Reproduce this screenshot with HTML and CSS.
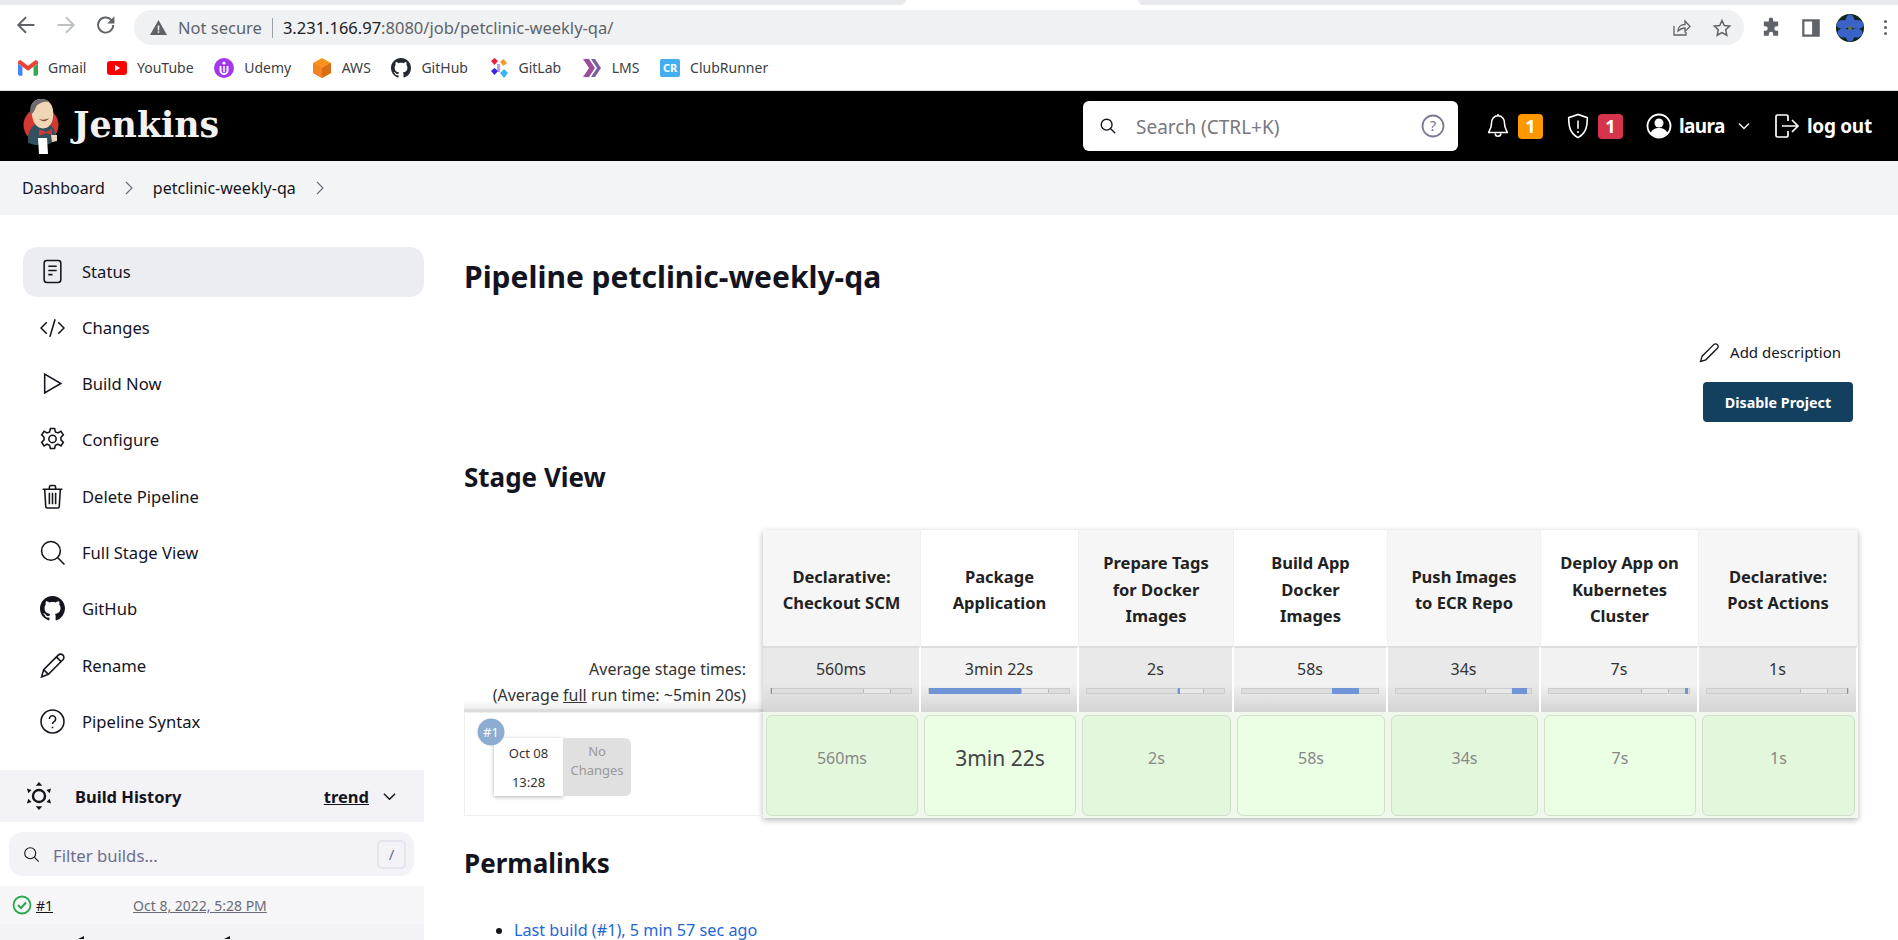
FILE: index.html
```html
<!DOCTYPE html>
<html lang="en">
<head>
    <meta charset="UTF-8">
    <title>petclinic-weekly-qa [Jenkins]</title>
    <link rel="stylesheet" href="styles.css">
</head>
<body>
    <!-- browser chrome -->
    <div class="tabstrip">
        <div class="tab-left"></div>
        <div class="tab-right"></div>
    </div>
    <div class="toolbar">
        <svg class="nav-icon" viewBox="0 0 20 20"><path d="M17 10H4M10 3.5 3.5 10l6.500 6.500" fill="none" stroke="#5f6368" stroke-width="1.6"/></svg>
        <svg class="nav-icon" viewBox="0 0 20 20"><path d="M3 10h13M10 3.5l6.500 6.500-6.500 6.500" fill="none" stroke="#bdc1c6" stroke-width="1.6"/></svg>
        <svg class="nav-icon" viewBox="0 0 20 20"><path d="M16 10a6.300 6.300 0 1 1-1.900-4.500L16.500 8" fill="none" stroke="#5f6368" stroke-width="1.6"/><path d="M17 2.800v6h-6z" fill="#5f6368"/></svg>
        <div class="omnibox">
            <svg class="warn" viewBox="0 0 16 14"><path d="M8 0 16 14H0z" fill="#5f6368"/><path d="M7.300 5h1.400v4.500H7.300zM7.300 10.500h1.400V12H7.300z" fill="#fff"/></svg>
            <span class="not-secure">Not secure</span>
            <span class="omni-sep"></span>
            <span class="url"><b>3.231.166.97</b>:8080/job/petclinic-weekly-qa/</span>
            <svg class="omni-share" viewBox="0 0 20 20"><path d="M3 8v9h12v-3M7 13c0-4 3-6.500 7-6.500V3l5 5.500-5 5V10c-3 0-5 1-7 3z" fill="none" stroke="#5f6368" stroke-width="1.3"/></svg>
            <svg class="omni-star" viewBox="0 0 20 20"><path d="m10 2.500 2.300 5 5.400.6-4 3.700 1.100 5.400-4.800-2.700-4.800 2.700 1.100-5.400-4-3.700 5.400-.6z" fill="none" stroke="#5f6368" stroke-width="1.5"/></svg>
        </div>
        <svg class="ext-icon" viewBox="0 0 20 20"><path d="M8 2.500a2 2 0 0 1 4 0V4h4.500v4.500H15a2 2 0 0 0 0 4h1.500V17H12v-1.500a2 2 0 0 0-4 0V17H3.500v-4.500H5a2 2 0 0 0 0-4H3.500V4H8z" fill="#5f6368"/></svg>
        <svg class="ext-icon" viewBox="0 0 20 20"><path d="M3 3h14v14H3z" fill="none" stroke="#5f6368" stroke-width="2"/><path d="M11 3h6v14h-6z" fill="#5f6368"/></svg>
        <svg class="avatar" viewBox="0 0 28 28">
            <circle cx="14" cy="14" r="14" fill="#12261d"/>
            <g fill="#3a62c8">
                <ellipse cx="14" cy="7" rx="4.500" ry="6.500"/>
                <ellipse cx="14" cy="21" rx="4.500" ry="6.500"/>
                <ellipse cx="7" cy="10.500" rx="6.500" ry="4.500"/>
                <ellipse cx="21" cy="10.500" rx="6.500" ry="4.500"/>
                <ellipse cx="7.500" cy="19" rx="6" ry="4.500"/>
                <ellipse cx="20.500" cy="19" rx="6" ry="4.500"/>
            </g>
            <circle cx="14" cy="14" r="2" fill="#5d7a2b"/>
        </svg>
        <span class="dots"><i></i><i></i><i></i></span>
    </div>
    <div class="bookmarks">
        <a class="bookmark">
            <svg viewBox="0 0 18 14"><path d="M0 3v9.500A1.500 1.500 0 0 0 1.500 14H4V6z" fill="#4285f4"/><path d="M14 6v8h2.500a1.500 1.500 0 0 0 1.500-1.500V3z" fill="#34a853"/><path d="M0 3 9 9.500 18 3V1.800C18 .3 16.200-.5 15 .5L9 5 3 .5C1.800-.5 0 .3 0 1.800z" fill="#ea4335"/></svg>
            Gmail
        </a>
        <a class="bookmark">
            <svg viewBox="0 0 20 14"><rect width="20" height="14" rx="3" fill="#f00"/><path d="m8 4 5 3-5 3z" fill="#fff"/></svg>
            YouTube
        </a>
        <a class="bookmark">
            <svg viewBox="0 0 20 20"><circle cx="10" cy="10" r="10" fill="#a435f0"/><path d="M6.500 8v4.500a3.500 3.500 0 0 0 7 0V8" fill="none" stroke="#fff" stroke-width="2"/><circle cx="10" cy="5" r="1.600" fill="#fff"/><path d="M10 8v6" stroke="#fff" stroke-width="1.5"/></svg>
            Udemy
        </a>
        <a class="bookmark">
            <svg viewBox="0 0 20 20"><path d="M10 0 19 5v10l-9 5-9-5V5z" fill="#f7931e"/><path d="M10 10v10l-9-5V5z" fill="#f58220"/><path d="M10 10 19 5v10l-9 5z" fill="#d96d14"/></svg>
            AWS
        </a>
        <a class="bookmark">
            <svg viewBox="0 0 16 16"><path fill="#24292f" d="M8 0C3.580 0 0 3.580 0 8c0 3.540 2.290 6.530 5.470 7.590.4.070.55-.17.55-.38 0-.19-.01-.82-.01-1.490-2.010.37-2.530-.49-2.690-.94-.09-.23-.48-.94-.82-1.130-.28-.15-.68-.52-.01-.53.63-.01 1.080.58 1.230.82.72 1.210 1.870.87 2.330.66.070-.52.28-.87.51-1.070-1.780-.2-3.640-.89-3.640-3.950 0-.87.31-1.590.82-2.150-.08-.2-.36-1.020.08-2.120 0 0 .67-.21 2.200.82.64-.18 1.320-.27 2-.27.68 0 1.360.09 2 .27 1.530-1.040 2.200-.82 2.200-.82.44 1.100.16 1.920.08 2.120.51.56.82 1.270.82 2.150 0 3.070-1.870 3.750-3.650 3.950.29.25.54.73.54 1.480 0 1.070-.01 1.930-.01 2.200 0 .21.15.46.55.38A8.013 8.013 0 0 0 16 8c0-4.420-3.580-8-8-8z"/></svg>
            GitHub
        </a>
        <a class="bookmark">
            <svg viewBox="0 0 20 20"><path d="M2 3 5.500 0 9 3 5.500 7z" fill="#e8203a"/><path d="M11 4 14.500 1 18 5l-3.500 3z" fill="#f59a23"/><path d="M2 13l3.500-3L9 13l-3.500 4z" fill="#3a22e0"/><path d="M11 15l4-4 4 4-4 5z" fill="#3ab5f5"/><path d="M8 6h3v8H8z" fill="#8d5bd0" opacity=".6"/></svg>
            GitLab
        </a>
        <a class="bookmark">
            <svg viewBox="0 0 20 20"><path d="M1 1h6l6 9-6 9H1l6-9z" fill="#9b4f96"/><path d="M9 1h4l6 9-6 9H9l6-9z" fill="#7b5aa6"/></svg>
            LMS
        </a>
        <a class="bookmark">
            <span class="cr-icon">CR</span>
            ClubRunner
        </a>
    </div>

    <!-- jenkins header -->
    <header class="page-header">
        <a class="logo">
            <svg class="logo-mark" viewBox="0 0 40 58">
                <circle cx="21" cy="28" r="17.5" fill="#d33833"/>
                <path d="M8 46c-1-8 2-16 8-19l14 1c5 3 6 10 5 16l-8 4-12 0z" fill="#335061"/>
                <path d="M11 14C10 6 15 2 21 2s11 4 12 11c1 8-1 14-5 17-5 3-10 1-13-3-2-3-3-8-4-13z" fill="#f0d6b7"/>
                <path d="M11 18C8 10 13 2 21 2c4 0 7 1 9 3-6-1-12 1-14 5-1 3-3 6-5 8z" fill="#6d6b6d"/>
                <path d="M19 22c3 1 7 1 10-1-2 4-7 4-10 1z" fill="#7b4a35"/>
                <path d="M19 32l7 3 6-3v6l-6-2-7 3z" fill="#d33833"/>
                <path d="M18 41h9l1 16H19z" fill="#fff"/>
                <path d="M31 38h6v6l-5 1z" fill="#f0d6b7"/>
            </svg>
            <span class="logo-text">Jenkins</span>
        </a>
        <div class="search-box">
            <svg class="search-icon" viewBox="0 0 20 20"><circle cx="8.5" cy="8.5" r="6" fill="none" stroke="#14141f" stroke-width="1.5"/><path d="m13 13 5 5" stroke="#14141f" stroke-width="1.5"/></svg>
            <span class="search-text">Search (CTRL+K)</span>
            <svg class="search-help" viewBox="0 0 24 24"><circle cx="12" cy="12" r="10.5" fill="none" stroke="#7b7b94" stroke-width="1.8"/><text x="12" y="17" text-anchor="middle" class="help-mark">?</text></svg>
        </div>
        <svg class="head-icon bell" viewBox="0 0 24 28"><path d="M12 3c-4.500 0-7 3.500-7 8 0 6-3 9-3 10h20c0-1-3-4-3-10 0-4.500-2.500-8-7-8zM9 22a3 3 0 0 0 6 0M12 1v2" fill="none" stroke="#fff" stroke-width="1.7"/></svg>
        <span class="count count-orange">1</span>
        <svg class="head-icon shield" viewBox="0 0 24 28"><path d="M12 1.500 2 5c0 11 2 17 10 21.500C20 22 22 16 22 5zM12 8v9M12 19.500v2" fill="none" stroke="#fff" stroke-width="1.7"/></svg>
        <span class="count count-red">1</span>
        <svg class="head-icon user" viewBox="0 0 26 26"><circle cx="13" cy="13" r="11.5" fill="none" stroke="#fff" stroke-width="1.8"/><circle cx="13" cy="10" r="4.5" fill="#fff"/><path d="M4.500 20c2-4 5-5 8.500-5s6.500 1 8.500 5c-2 2.500-5 4-8.500 4s-6.500-1.500-8.500-4z" fill="#fff"/></svg>
        <span class="head-link user-name">laura</span>
        <svg class="head-chevron" viewBox="0 0 12 8"><path d="m1 1.500 5 5 5-5" fill="none" stroke="#fff" stroke-width="1.3"/></svg>
        <svg class="head-icon logout" viewBox="0 0 26 26"><path d="M14 8V3.500A1.500 1.500 0 0 0 12.500 2h-9A1.500 1.500 0 0 0 2 3.500v19A1.500 1.500 0 0 0 3.500 24h9a1.500 1.500 0 0 0 1.500-1.500V18M8 13h16M18 7l6 6-6 6" fill="none" stroke="#fff" stroke-width="1.7"/></svg>
        <span class="head-link log-out">log out</span>
    </header>

    <nav class="breadcrumbs">
        <a>Dashboard</a>
        <svg viewBox="0 0 8 14"><path d="m1 1 6 6-6 6" fill="none" stroke="#6b6b78" stroke-width="1.1"/></svg>
        <a>petclinic-weekly-qa</a>
        <svg viewBox="0 0 8 14"><path d="m1 1 6 6-6 6" fill="none" stroke="#6b6b78" stroke-width="1.1"/></svg>
    </nav>

    <div class="page">
        <aside class="sidebar">
            <div class="tasks">
                <a class="task task-active">
                    <svg viewBox="0 0 24 24"><rect x="4" y="1.5" width="16" height="21" rx="2.5"/><path d="M8 7h8M8 11h8M8 15h4"/></svg>
                    Status
                </a>
                <a class="task">
                    <svg viewBox="0 0 24 24"><path d="M6.500 7 1 12.500 6.500 18M17.500 7l5.500 5.500L17.500 18M14.500 4l-5 17"/></svg>
                    Changes
                </a>
                <a class="task">
                    <svg viewBox="0 0 24 24"><path d="M4.500 3v18L20 12z"/></svg>
                    Build Now
                </a>
                <a class="task">
                    <svg viewBox="0 0 24 24"><path d="M10 1.500h4l.8 3.200 2.400 1 2.900-1.600 2.300 3.400-2.300 2.400v2.400l2.300 2.400-2.300 3.400-2.900-1.600-2.400 1-.8 3.200h-4l-.8-3.200-2.400-1-2.900 1.600-2.300-3.400 2.300-2.400V9.900L1.600 7.500l2.300-3.400 2.900 1.600 2.400-1z"/><circle cx="12" cy="11.5" r="3.5"/></svg>
                    Configure
                </a>
                <a class="task">
                    <svg viewBox="0 0 24 24"><path d="M2.500 5h19M9 5V3a1.500 1.500 0 0 1 1.500-1.500h3A1.500 1.500 0 0 1 15 3v2M4.500 5l1 16.500A1.500 1.500 0 0 0 7 23h10a1.500 1.500 0 0 0 1.500-1.500l1-16.500M9 8.500v11M12 8.500v11M15 8.500v11"/></svg>
                    Delete Pipeline
                </a>
                <a class="task">
                    <svg viewBox="0 0 24 24"><circle cx="10.5" cy="10.5" r="9"/><path d="m17 17 6.500 6.500"/></svg>
                    Full Stage View
                </a>
                <a class="task">
                    <svg class="solid" viewBox="0 0 16 16"><path d="M8 0C3.580 0 0 3.580 0 8c0 3.540 2.290 6.530 5.470 7.590.4.070.55-.17.55-.38 0-.19-.01-.82-.01-1.490-2.010.37-2.530-.49-2.690-.94-.09-.23-.48-.94-.82-1.130-.28-.15-.68-.52-.01-.53.63-.01 1.080.58 1.230.82.72 1.210 1.870.87 2.330.66.070-.52.28-.87.51-1.070-1.780-.2-3.640-.89-3.640-3.950 0-.87.31-1.590.82-2.150-.08-.2-.36-1.020.08-2.120 0 0 .67-.21 2.200.82.64-.18 1.320-.27 2-.27.68 0 1.360.09 2 .27 1.530-1.040 2.200-.82 2.200-.82.44 1.100.16 1.920.08 2.120.51.56.82 1.270.82 2.150 0 3.070-1.870 3.750-3.650 3.950.29.25.54.73.54 1.480 0 1.070-.01 1.930-.01 2.200 0 .21.15.46.55.38A8.013 8.013 0 0 0 16 8c0-4.420-3.580-8-8-8z"/></svg>
                    GitHub
                </a>
                <a class="task">
                    <svg viewBox="0 0 24 24"><path d="m1.500 23 2-7L17.500 2a3 3 0 0 1 4.500 4.500L8 20.500zM3.500 16l4.500 4.500M16 4l4 4"/></svg>
                    Rename
                </a>
                <a class="task">
                    <svg viewBox="0 0 24 24"><circle cx="12" cy="12" r="11"/><path d="M9 9.500a3 3 0 1 1 4.500 2.600c-1 .6-1.500 1.200-1.500 2.400M12 17v1.500"/></svg>
                    Pipeline Syntax
                </a>
            </div>

            <div class="history-head">
                <svg class="history-icon" viewBox="0 0 28 30"><circle cx="14" cy="15" r="6.5" fill="none" stroke="#14141f" stroke-width="2.6"/><path d="m14 0 3.500 4h-7zM14 30l-3.500-4h7zM1 7l5 1.500L2.500 12zM27 7l-5 1.500 3.500 3.500zM1 23l5-1.500L2.500 18zM27 23l-5-1.500 3.500-3.500z" fill="#14141f"/></svg>
                <span class="history-title">Build History</span>
                <a class="trend">trend</a>
                <svg class="trend-chevron" viewBox="0 0 14 9"><path d="m1 1.500 6 6 6-6" fill="none" stroke="#14141f" stroke-width="1.5"/></svg>
            </div>
            <div class="filter">
                <svg viewBox="0 0 20 20"><circle cx="8.5" cy="8.5" r="6.5" fill="none" stroke="#14141f" stroke-width="1.3"/><path d="m13.500 13.500 5 5" stroke="#14141f" stroke-width="1.3"/></svg>
                <span class="filter-text">Filter builds...</span>
                <span class="filter-key">/</span>
            </div>
            <div class="build-row">
                <svg viewBox="0 0 20 20"><circle cx="10" cy="10" r="8.5" fill="none" stroke="#2aa84f" stroke-width="1.8"/><path d="m6 10 3 3 5-5.500" fill="none" stroke="#2aa84f" stroke-width="2"/></svg>
                <a class="build-number">#1</a>
                <a class="build-date">Oct 8, 2022, 5:28 PM</a>
            </div>
            <div class="build-rest">
                <i class="tip"></i>
                <i class="tip"></i>
            </div>
        </aside>

        <main class="content">
            <h1>Pipeline petclinic-weekly-qa</h1>
            <div class="actions">
                <a class="add-desc">
                    <svg viewBox="0 0 20 20"><path d="m1.500 18.500 1.500-5L14 2.500a2.100 2.100 0 0 1 3.500 3.500L6.500 17z" fill="none" stroke="#14141f" stroke-width="1.3"/></svg>
                    Add description
                </a>
                <button class="disable-btn">Disable Project</button>
            </div>

            <h2 class="stage-title">Stage View</h2>
            <section class="stage-view">
                <div class="stage-labels">
                    <div class="labels-top"></div>
                    <div class="labels-avg">
                        <span>Average stage times:</span>
                        <span>(Average <u>full</u> run time: ~5min 20s)</span>
                    </div>
                    <div class="labels-run">
                        <span class="run-badge">#1</span>
                        <div class="run-date"><span>Oct 08</span><span>13:28</span></div>
                        <div class="run-changes">No<br>Changes</div>
                    </div>
                </div>
                <div class="stage-grid">
                    <div class="stage-head">Declarative:<br>Checkout SCM</div>
                    <div class="stage-head">Package<br>Application</div>
                    <div class="stage-head">Prepare Tags<br>for Docker<br>Images</div>
                    <div class="stage-head">Build App<br>Docker<br>Images</div>
                    <div class="stage-head">Push Images<br>to ECR Repo</div>
                    <div class="stage-head">Deploy App on<br>Kubernetes<br>Cluster</div>
                    <div class="stage-head">Declarative:<br>Post Actions</div>

                    <div class="stage-avg">560ms<div class="bar"><i style="left:0;width:0.7%"></i></div></div>
                    <div class="stage-avg">3min 22s<div class="bar"><i style="left:0;width:66%"></i></div></div>
                    <div class="stage-avg">2s<div class="bar"><i style="left:66.5%;width:1.5%"></i></div></div>
                    <div class="stage-avg">58s<div class="bar"><i style="left:66.5%;width:19.5%"></i></div></div>
                    <div class="stage-avg">34s<div class="bar"><i style="left:85.8%;width:11%"></i></div></div>
                    <div class="stage-avg">7s<div class="bar"><i style="left:97%;width:2.5%"></i></div></div>
                    <div class="stage-avg">1s<div class="bar"><i style="left:99.3%;width:0.7%"></i></div></div>

                    <div class="stage-cell"><div class="cell-box">560ms</div></div>
                    <div class="stage-cell"><div class="cell-box cell-long">3min 22s</div></div>
                    <div class="stage-cell"><div class="cell-box">2s</div></div>
                    <div class="stage-cell"><div class="cell-box">58s</div></div>
                    <div class="stage-cell"><div class="cell-box">34s</div></div>
                    <div class="stage-cell"><div class="cell-box">7s</div></div>
                    <div class="stage-cell"><div class="cell-box">1s</div></div>
                </div>
            </section>

            <h2 class="permalinks-title">Permalinks</h2>
            <ul class="permalinks">
                <li><a>Last build (#1), 5 min 57 sec ago</a></li>
            </ul>
        </main>
    </div>
</body>
</html>
```
FILE: styles.css
```css
html, body {
    margin: 0;
    padding: 0;
}

body {
    width: 1898px;
    height: 940px;
    overflow: hidden;
    background: #fff;
    color: #14141f;
    font-family: "Noto Sans", "Open Sans", sans-serif;
    font-size: 16px;
}

svg {
    display: block;
    flex: none;
}

/* browser chrome */
.tabstrip {
    display: flex;
    justify-content: space-between;
    height: 5px;
}

.tab-left {
    width: 906px;
    background: #e8eaed;
    border-radius: 0 0 8px 0;
}

.tab-right {
    width: 760px;
    background: #e8eaed;
    border-radius: 0 0 0 8px;
}

.toolbar {
    display: flex;
    align-items: center;
    height: 40px;
    padding: 0 0 0 14px;
}

.nav-icon {
    width: 24px;
    height: 24px;
    margin-right: 16px;
}

.omnibox {
    display: flex;
    align-items: center;
    width: 1610px;
    height: 35px;
    margin-top: 5px;
    padding: 0 11px 0 16px;
    box-sizing: border-box;
    background: #eff1f3;
    border-radius: 18px;
    font-size: 16.5px;
    color: #5f6368;
}

.warn {
    width: 17px;
    height: 15px;
    margin-right: 11px;
}

.omni-sep {
    width: 1px;
    height: 20px;
    margin: 0 10px;
    background: #9aa0a6;
}

.url b {
    font-weight: 400;
    color: #202124;
}

.omni-share {
    width: 20px;
    height: 20px;
    margin-left: auto;
}

.omni-star {
    width: 20px;
    height: 20px;
    margin-left: 21px;
    margin-right: 1px;
}

.ext-icon {
    width: 22px;
    height: 22px;
    margin-top: 5px;
    margin-left: 16px;
}

.ext-icon + .ext-icon {
    margin-left: 18px;
}

.avatar {
    width: 28px;
    height: 28px;
    margin-top: 5px;
    margin-left: 14px;
}

.dots {
    display: flex;
    flex-direction: column;
    gap: 3px;
    margin-top: 5px;
    margin-left: 20px;
}

.dots i {
    width: 3px;
    height: 3px;
    background: #5f6368;
    border-radius: 50%;
}

.bookmarks {
    display: flex;
    align-items: center;
    gap: 20.6px;
    height: 46px;
    padding-left: 18px;
    box-sizing: border-box;
    border-bottom: 1px solid #dadce0;
    font-size: 14px;
    color: #3c4043;
}

.bookmark {
    display: flex;
    align-items: center;
    gap: 10px;
}

.bookmark svg {
    width: 20px;
    height: 20px;
}

.cr-icon {
    width: 20px;
    height: 18px;
    background: #45aef0;
    border-radius: 2px;
    color: #fff;
    font-size: 11px;
    font-weight: 700;
    line-height: 18px;
    text-align: center;
}

/* jenkins header */
.page-header {
    display: flex;
    align-items: center;
    height: 70px;
    padding-left: 20px;
    box-sizing: border-box;
    background: #000;
    color: #fff;
}

.logo {
    display: flex;
    align-items: center;
    margin-right: auto;
}

.logo-mark {
    width: 40px;
    height: 58px;
}

.logo-text {
    margin-left: 13px;
    padding-bottom: 4px;
    font-family: "DejaVu Serif", serif;
    font-size: 34.8px;
    font-weight: 700;
    color: #f2f2f2;
}

.search-box {
    display: flex;
    align-items: center;
    width: 375px;
    height: 50px;
    padding: 0 13px 0 16px;
    box-sizing: border-box;
    background: #fff;
    border-radius: 6px;
}

.search-icon {
    width: 18px;
    height: 18px;
}

.search-text {
    margin-left: 19px;
    padding-top: 2px;
    color: #77777f;
    font-size: 19px;
}

.search-help {
    width: 24px;
    height: 24px;
    margin-left: auto;
}

.help-mark {
    fill: #7b7b94;
    font-size: 15px;
}

.head-icon {
    width: 26px;
    height: 26px;
}

.bell {
    margin-left: 27px;
}

.shield {
    margin-left: 22px;
}

.user {
    margin-left: 23px;
}

.logout {
    margin-left: 24px;
}

.count {
    width: 25px;
    height: 25px;
    margin-left: 7px;
    border-radius: 4px;
    font-size: 18px;
    font-weight: 700;
    line-height: 25px;
    text-align: center;
}

.count-orange {
    background: #ff9800;
}

.count-red {
    background: #d6334c;
}

.head-link {
    font-size: 19px;
    font-weight: 700;
    letter-spacing: -0.3px;
}

.user-name {
    width: 45px;
    margin-left: 7px;
    letter-spacing: -0.6px;
}

.log-out {
    width: 65px;
    margin: 0 26px 0 7px;
    white-space: nowrap;
}

.head-chevron {
    width: 12px;
    height: 8px;
    margin-left: 14px;
}

/* breadcrumbs */
.breadcrumbs {
    display: flex;
    align-items: center;
    height: 54px;
    padding-left: 22px;
    background: #f3f4f6;
    font-size: 16px;
}

.breadcrumbs svg {
    width: 8px;
    height: 14px;
    margin: 0 20px;
}

/* sidebar */
.page {
    display: flex;
}

.sidebar {
    flex: none;
    width: 424px;
    height: 725px;
    overflow: hidden;
}

.tasks {
    display: flex;
    flex-direction: column;
    gap: 6.3px;
    padding: 32px 0 0 23px;
}

.task {
    display: flex;
    align-items: center;
    gap: 17px;
    height: 50px;
    padding: 0 0 2px 17px;
    box-sizing: border-box;
    border-radius: 14px;
    font-size: 16.6px;
}

.task svg {
    width: 25px;
    height: 25px;
    fill: none;
    stroke: #14141f;
    stroke-width: 1.5;
}

.task svg.solid {
    fill: #14141f;
    stroke: none;
}

.task-active {
    background: #ecedf3;
}

.history-head {
    display: flex;
    align-items: center;
    height: 52px;
    margin-top: 23px;
    padding-left: 26px;
    background: #f2f2f7;
}

.history-icon {
    width: 26px;
    height: 30px;
}

.history-title {
    margin-left: 23px;
    font-size: 16.5px;
    font-weight: 700;
}

.trend {
    margin-left: auto;
    font-size: 16.5px;
    font-weight: 700;
    text-decoration: underline;
}

.trend-chevron {
    width: 13px;
    height: 9px;
    margin: 0 28px 0 14px;
}

.filter {
    display: flex;
    align-items: center;
    height: 44px;
    margin: 10px 10px 10px 9px;
    padding: 0 8px 0 14px;
    background: #f2f2f7;
    border-radius: 14px;
}

.filter svg {
    width: 17px;
    height: 17px;
}

.filter-text {
    margin-left: 13px;
    padding-top: 2px;
    color: #6e6e8c;
    font-size: 16.7px;
}

.filter-key {
    width: 25px;
    height: 25px;
    margin-left: auto;
    border: 2px solid #e5e5ee;
    border-radius: 5px;
    color: #6e6e8c;
    font-size: 15px;
    line-height: 25px;
    text-align: center;
}

.build-row {
    display: flex;
    align-items: center;
    height: 38px;
    padding-left: 12px;
    background: #f6f6f8;
    color: #6b6b78;
    font-size: 14px;
}

.build-row svg {
    width: 20px;
    height: 20px;
}

.build-number {
    margin-left: 4px;
    color: #14141f;
    text-decoration: underline;
}

.build-date {
    margin-left: 80px;
    text-decoration: underline;
}

.build-rest {
    display: flex;
    gap: 140px;
    height: 60px;
    padding: 12px 0 0 78px;
    box-sizing: border-box;
    background: #f2f2f7;
}

.tip {
    width: 0;
    height: 0;
    border-style: solid;
    border-width: 0 0 3px 6px;
    border-color: transparent transparent #14141f transparent;
}

/* main column */
.content {
    flex: 1;
    min-width: 0;
    padding: 38px 40px 0;
}

h1, h2 {
    margin: 0;
    font-weight: 700;
}

h1 {
    font-size: 30px;
    line-height: 48px;
}

h2 {
    font-size: 26px;
    line-height: 36px;
}

.actions {
    display: flex;
    flex-direction: column;
    align-items: flex-end;
    gap: 15px;
    margin-top: 36px;
    padding-right: 5px;
}

.add-desc {
    display: flex;
    align-items: center;
    gap: 10px;
    height: 30px;
    margin-right: 12px;
    font-size: 15px;
}

.add-desc svg {
    width: 21px;
    height: 21px;
}

.disable-btn {
    width: 150px;
    height: 40px;
    border: 0;
    border-radius: 4px;
    background: #14405f;
    color: #fff;
    font-family: inherit;
    font-size: 14.3px;
    font-weight: 700;
}

.stage-title {
    margin-top: 37px;
}

.stage-view {
    display: flex;
    margin-top: 35px;
}

.stage-labels {
    flex: none;
    width: 299px;
    font-size: 16px;
    color: #333;
}

.labels-top {
    height: 116px;
}

.labels-avg {
    display: flex;
    flex-direction: column;
    align-items: flex-end;
    box-sizing: border-box;
    height: 66px;
    padding: 10px 17px 0 0;
    line-height: 26px;
    background: linear-gradient(to bottom, #fff 82%, #ececec 96%, #ddd 96%);
}

.labels-run {
    position: relative;
    display: flex;
    height: 104px;
    box-sizing: border-box;
    padding: 25px 0 0 29px;
    border: 1px solid #eee;
    border-right: 0;
}

.run-badge {
    position: absolute;
    top: 4px;
    left: 11px;
    width: 30px;
    height: 30px;
    border-radius: 50%;
    background: #8cacd2;
    color: #fff;
    font-size: 14px;
    line-height: 30px;
    text-align: center;
    transform: scale(0.9);
}

.run-date {
    display: flex;
    flex-direction: column;
    align-items: center;
    justify-content: space-around;
    width: 69px;
    height: 58px;
    background: #fff;
    box-shadow: 0 1px 4px rgba(0, 0, 0, 0.3);
    font-size: 13px;
}

.run-changes {
    width: 68px;
    height: 58px;
    padding-top: 4px;
    box-sizing: border-box;
    background: #e0e0e0;
    border-radius: 0 6px 6px 0;
    color: #999;
    font-size: 13px;
    line-height: 19px;
    text-align: center;
}

.stage-grid {
    display: grid;
    grid-template-columns: 158px 158px 155px 154px 153px 158px 159px;
    grid-template-rows: 116px 66px 106px;
    box-shadow: 0 2px 6px rgba(0, 0, 0, 0.3);
}

.stage-head {
    display: flex;
    align-items: center;
    justify-content: center;
    padding-top: 4px;
    box-sizing: border-box;
    background: #f6f6f6;
    font-size: 16.5px;
    font-weight: 700;
    line-height: 26.5px;
    text-align: center;
    color: #222;
    border-right: 1px solid #f0f0f0;
}

.stage-head:nth-child(even) {
    background: #fff;
}

.stage-avg {
    padding: 9px 6px 0;
    box-sizing: border-box;
    background: linear-gradient(to bottom, #e9e9e9 55%, #d4d4d4 100%);
    border-top: 2px solid #ddd;
    border-right: 2px solid #fff;
    font-size: 16px;
    line-height: 24px;
    color: #333;
    text-align: center;
}

.stage-avg:nth-child(odd) {
    background: linear-gradient(to bottom, #f2f2f2 55%, #d4d4d4 100%);
}

.bar {
    position: relative;
    height: 6px;
    margin: 7px 1px 0;
    background: linear-gradient(to right, #ddd 66%, #bbb 66%, #bbb 66.5%, #e8e8e8 66.5%, #e8e8e8 85%, #bbb 85%, #bbb 85.5%, #ddd 85.5%);
    border: 1px solid #ccc;
    box-sizing: border-box;
}

.bar i {
    position: absolute;
    top: -1px;
    bottom: -1px;
    background: #6f95d6;
}

.stage-cell {
    padding: 3px 3px 2px;
    box-sizing: border-box;
    background: #f0f8ed;
}

.cell-box {
    height: 100%;
    padding-top: 27px;
    box-sizing: border-box;
    background: #e3f7dd;
    border: 1px solid #d0e0cb;
    border-radius: 6px;
    color: #888;
    font-size: 16px;
    line-height: 30px;
    text-align: center;
}

.stage-cell:nth-child(even) .cell-box {
    background: #eaffe4;
}

.cell-long {
    color: #444;
    font-size: 21px;
}

.permalinks-title {
    margin-top: 27px;
}

.permalinks {
    margin: 36px 0 0;
    padding-left: 50px;
    font-size: 16.2px;
    line-height: 26px;
}

.permalinks a {
    color: #1f66d6;
}
```
